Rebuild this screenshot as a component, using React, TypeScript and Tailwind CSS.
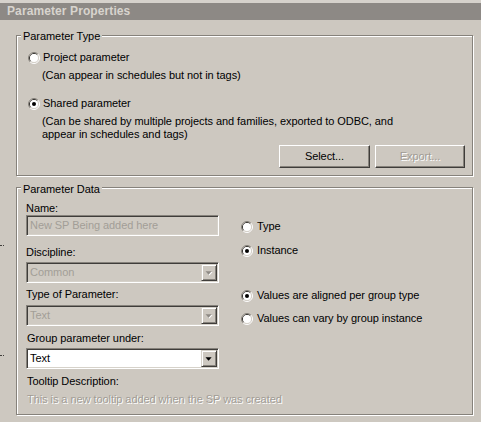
import React from "react";

const BG = "bg-[#cdc8c0]";

function Radio({ checked }: { checked?: boolean }) {
  return (
    <svg width="12" height="12" viewBox="0 0 12 12" className="shrink-0">
      <path d="M2.11 9.89 A5.5 5.5 0 0 1 9.89 2.11" fill="none" stroke="#86827b" strokeWidth="1" />
      <path d="M9.89 2.11 A5.5 5.5 0 0 1 2.11 9.89" fill="none" stroke="#ffffff" strokeWidth="1" />
      <path d="M2.82 9.18 A4.5 4.5 0 0 1 9.18 2.82" fill="none" stroke="#3c3a37" strokeWidth="1" />
      <path d="M9.18 2.82 A4.5 4.5 0 0 1 2.82 9.18" fill="none" stroke="#d6d2ca" strokeWidth="1" />
      <circle cx="6" cy="6" r="4" fill="#ffffff" />
      {checked && <circle cx="6" cy="6" r="2" fill="#000000" />}
    </svg>
  );
}

function RadioRow({ checked, label, gap }: { checked?: boolean; label: string; gap: string }) {
  return (
    <div className={`flex h-[13px] items-center ${gap}`}>
      <Radio checked={checked} />
      <span className="whitespace-nowrap">{label}</span>
    </div>
  );
}

function Arrow({ disabled }: { disabled?: boolean }) {
  return (
    <svg width="16" height="17" viewBox="0 0 16 17">
      {disabled && <path d="M5 8h7l-3.5 4z" fill="#ffffff" />}
      <path d="M4 7h7l-3.5 4z" fill={disabled ? "#8e8a84" : "#000000"} />
    </svg>
  );
}

function Combo({ text, disabled, white }: { text: string; disabled?: boolean; white?: boolean }) {
  return (
    <div
      className={`flex h-[21px] w-[193px] items-center border border-t-[#86827b] border-l-[#86827b] border-r-white border-b-white shadow-[inset_1px_1px_0_#3f3d3a,inset_-1px_-1px_0_#d6d2ca] p-[1px] ${
        white ? "bg-white" : "bg-[#cfcac2]"
      }`}
    >
      <span className={`flex-1 pl-[2px] ${disabled ? "text-[#a29e97]" : "text-black"} whitespace-nowrap`}>{text}</span>
      <div className="flex h-[17px] w-[16px] items-center justify-center border border-t-[#d6d2ca] border-l-[#d6d2ca] border-r-[#3f3d3a] border-b-[#3f3d3a] bg-[#cdc8c0] shadow-[inset_1px_1px_0_#ffffff,inset_-1px_-1px_0_#86827b]">
        <Arrow disabled={disabled} />
      </div>
    </div>
  );
}

function Button({ label, disabled, w }: { label: string; disabled?: boolean; w: string }) {
  return (
    <div
      className={`flex h-[23px] ${w} items-center justify-center border border-t-white border-l-white border-r-[#3f3d3a] border-b-[#3f3d3a] shadow-[inset_-1px_-1px_0_#86827b] ${
        disabled ? "text-[#a19c95] [text-shadow:1px_1px_0_#ffffff]" : "text-black"
      }`}
    >
      {label}
    </div>
  );
}

export default function App() {
  return (
    <div
      className={`relative h-[422px] w-[481px] overflow-hidden ${BG} text-[11px] leading-[13px] tracking-[-0.06px] text-black`}
      style={{ fontFamily: '"Liberation Sans", Arial, sans-serif' }}
    >
      {/* title bar */}
      <div className="flex h-[20px] items-center border-t-[3px] border-t-[#d6d2cc] bg-[#8d8985] pl-[7px] text-[12px] font-bold tracking-[0.1px] text-[#d8d4ce]">
        Parameter Properties
      </div>

      <div className="pl-[16px]">
        {/* Parameter Type group */}
        <div className="relative mt-[15px] h-[141px] w-[457px] border border-[#86827b] shadow-[inset_1px_1px_0_#ffffff,1px_1px_0_#ffffff]">
          <span className={`absolute left-[4px] top-[-6px] px-[2px] ${BG}`}>Parameter Type</span>
          <div className="flex flex-col pl-[11px] pt-[15px]">
            <RadioRow label="Project parameter" gap="gap-[3px]" />
            <div className="ml-[14px] mt-[5px] h-[13px] whitespace-nowrap">(Can appear in schedules but not in tags)</div>
            <div className="mt-[15px]">
              <RadioRow checked label="Shared parameter" gap="gap-[3px]" />
            </div>
            <div className="ml-[14px] mt-[5px] whitespace-nowrap">
              <div className="h-[13px]">(Can be shared by multiple projects and families, exported to ODBC, and</div>
              <div className="h-[13px]">appear in schedules and tags)</div>
            </div>
            <div className="mt-[4px] flex justify-end gap-[5px] pr-[7px]">
              <Button label="Select..." w="w-[91px]" />
              <Button label="Export..." w="w-[90px]" disabled />
            </div>
          </div>
        </div>

        {/* Parameter Data group */}
        <div className="relative mt-[11px] h-[228px] w-[457px] border border-[#86827b] shadow-[inset_1px_1px_0_#ffffff,1px_1px_0_#ffffff]">
          <span className={`absolute left-[4px] top-[-5px] px-[2px] ${BG}`}>Parameter Data</span>
          <div className="flex">
            <div className="ml-[9px] flex w-[193px] flex-col pt-[14px]">
              <div className="h-[13px]">Name:</div>
              <div className="flex h-[21px] w-[193px] items-center border border-t-[#86827b] border-l-[#86827b] border-r-white border-b-white bg-[#cfcac2] pl-[3px] text-[#a29e97] shadow-[inset_1px_1px_0_#3f3d3a,inset_-1px_-1px_0_#d6d2ca]">
                New SP Being added here
              </div>
              <div className="mt-[10px] h-[13px]">Discipline:</div>
              <div className="mt-[3px]">
                <Combo text="Common" disabled />
              </div>
              <div className="mt-[5px] h-[13px]">Type of Parameter:</div>
              <div className="mt-[4px]">
                <Combo text="Text" disabled />
              </div>
              <div className="mt-[6px] h-[13px] pl-[1px]">Group parameter under:</div>
              <div className="mt-[3px]">
                <Combo text="Text" white />
              </div>
              <div className="mt-[6px] h-[13px] pl-[1px]">Tooltip Description:</div>
              <div className="mt-[5px] h-[13px] whitespace-nowrap pl-[1px] text-[#a19c95] [text-shadow:1px_1px_0_#ffffff]">
                This is a new tooltip added when the SP was created
              </div>
            </div>
            <div className="ml-[22px] flex flex-col pt-[32px]">
              <RadioRow label="Type" gap="gap-[4px]" />
              <div className="mt-[11px]">
                <RadioRow checked label="Instance" gap="gap-[4px]" />
              </div>
              <div className="mt-[32px]">
                <RadioRow checked label="Values are aligned per group type" gap="gap-[4px]" />
              </div>
              <div className="mt-[10px]">
                <RadioRow label="Values can vary by group instance" gap="gap-[4px]" />
              </div>
            </div>
          </div>
        </div>
      </div>

      {/* stray marks at the left edge */}
      <span className="absolute left-0 top-[245px] h-[1px] w-[4px] border-t border-dotted border-[#3f3d3a]" />
      <span className="absolute left-0 top-[355px] h-[1px] w-[4px] border-t border-dotted border-[#3f3d3a]" />
    </div>
  );
}
